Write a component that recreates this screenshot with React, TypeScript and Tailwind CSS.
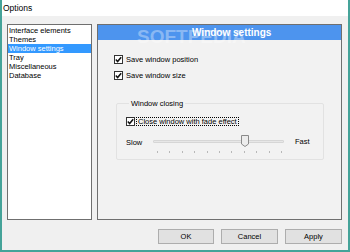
import React from 'react'

const sections = [
  'Interface elements',
  'Themes',
  'Window settings',
  'Tray',
  'Miscellaneous',
  'Database',
]

function CheckBox({ checked = true }: { checked?: boolean }) {
  return (
    <div className="w-[9px] h-[9px] border border-[#333333] bg-white flex-shrink-0 flex items-center justify-center">
      {checked && (
        <svg width="7" height="7" viewBox="0 0 7 7">
          <path d="M0.8 3.6 L2.6 5.5 L6.2 1.2" fill="none" stroke="#111" strokeWidth="1.5" />
        </svg>
      )}
    </div>
  )
}

function Slider() {
  const ticks = Array.from({ length: 11 }, (_, i) => 4 + i * 12.4)
  return (
    <div className="relative w-[131px] h-[20px]">
      <div className="absolute left-0 right-0 top-[6px] h-[3px] bg-[#e7e7e7] border border-[#d6d6d6] rounded-[1px]" />
      <svg className="absolute left-[88px] top-[1px]" width="8" height="12" viewBox="0 0 8 12">
        <path d="M0.5 0.5 H7.5 V9 L4 11.5 L0.5 9 Z" fill="#ececec" stroke="#8a8a8a" />
      </svg>
      {ticks.map((x, i) => (
        <div
          key={i}
          className="absolute top-[17px] w-px h-[2px] bg-[#b8b8b8]"
          style={{ left: x }}
        />
      ))}
    </div>
  )
}

export default function App() {
  return (
    <div className="relative w-[350px] h-[252px] flex flex-col border-2 border-t-0 border-[#45a399] bg-[#f0f0f0] font-['Liberation_Sans',Arial,sans-serif] text-[7.5px] leading-[9px] text-black overflow-hidden">
      <div className="h-[16px] bg-white pl-[1px] pt-[2px] text-[8.5px] leading-[12px]">Options</div>

      <div className="flex gap-[5px] pl-[5px] pt-[8px]">
        <div className="w-[85px] h-[196px] bg-white border border-[#6f6f6f] pt-px">
          {sections.map((s) => (
            <div
              key={s}
              className={
                s === 'Window settings'
                  ? 'h-[9px] pl-px bg-[#3399ff] text-white'
                  : 'h-[9px] pl-px'
              }
            >
              {s}
            </div>
          ))}
        </div>

        <div className="w-[245px] h-[196px] border border-[#6f6f6f] bg-[#f2f2f2] flex flex-col">
          <div className="h-[15px] bg-[#4d94ee] text-white font-bold text-[10px] leading-[15px] pl-[94px]">
            Window settings
          </div>

          <div className="flex items-center gap-[3px] ml-[16px] mt-[15px] h-[9px]">
            <CheckBox />
            <span>Save window position</span>
          </div>
          <div className="flex items-center gap-[3px] ml-[16px] mt-[7px] h-[9px]">
            <CheckBox />
            <span>Save window size</span>
          </div>

          <fieldset className="ml-[18px] mt-[19px] w-[208px] border border-[#e2e2e2] rounded-[2px] pl-[9px] pb-[5px]">
            <legend className="ml-[3px] px-[2px] leading-[9px]">Window closing</legend>
            <div className="flex items-center gap-px mt-[9px] h-[9px]">
              <CheckBox />
              <span className="border border-dotted border-black px-px leading-[7px] h-[9px]">
                Close window with fade effect
              </span>
            </div>
            <div className="flex items-start mt-[8px]">
              <span className="w-[27px] pt-[4px]">Slow</span>
              <Slider />
              <span className="ml-[11px] pt-[3px]">Fast</span>
            </div>
          </fieldset>
        </div>
      </div>

      <div className="flex justify-end gap-[7px] pr-[6px] mt-[9px]">
        <button className="w-[56px] h-[15px] bg-[#e1e1e1] border border-[#adadad] leading-[13px]">OK</button>
        <button className="w-[57px] h-[15px] bg-[#e1e1e1] border border-[#adadad] leading-[13px]">Cancel</button>
        <button className="w-[57px] h-[15px] bg-[#e1e1e1] border border-[#adadad] leading-[13px]">Apply</button>
      </div>

      <span className="absolute left-[135px] top-[27px] text-[19px] leading-[20px] font-bold text-white/35 pointer-events-none">
        SOFTPEDIA
      </span>
    </div>
  )
}
